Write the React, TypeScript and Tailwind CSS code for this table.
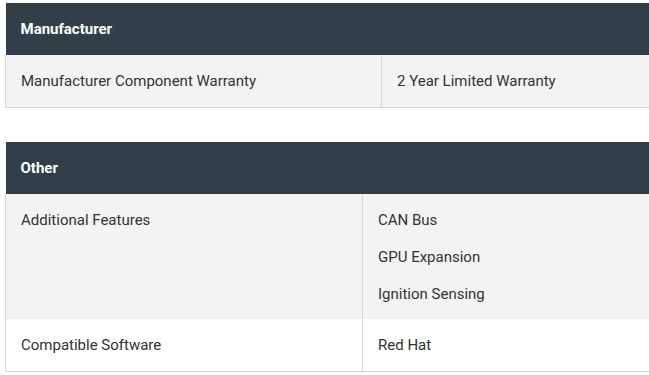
import React from 'react';

type Row = { label: string; values: string[]; shaded?: boolean };
type Section = { title: string; firstCol: string; rows: Row[] };

const sections: Section[] = [
    {
        title: 'Manufacturer',
        firstCol: 'w-[376px]',
        rows: [{ label: 'Manufacturer Component Warranty', values: ['2 Year Limited Warranty'], shaded: true }],
    },
    {
        title: 'Other',
        firstCol: 'w-[357px]',
        rows: [
            { label: 'Additional Features', values: ['CAN Bus', 'GPU Expansion', 'Ignition Sensing'], shaded: true },
            { label: 'Compatible Software', values: ['Red Hat'] },
        ],
    },
];

const SpecTable: React.FC<{ section: Section }> = ({ section }) => (
    <table className="w-[700px] border-collapse border-b border-[#d3d6da] text-[15px] leading-[22px] text-[#333333]">
        <thead>
            <tr className="bg-[#333f48]">
                <th colSpan={2} className="h-[52px] px-[15px] text-left font-bold text-white">
                    {section.title}
                </th>
            </tr>
        </thead>
        <tbody>
            {section.rows.map((row, i) => {
                const last = i === section.rows.length - 1;
                const cell = `border-l border-[#d3d6da] px-[15px] pt-[15px] align-top ${last ? 'pb-[15px]' : 'pb-[14px]'}`;
                return (
                    <tr key={row.label} className={row.shaded ? 'bg-[#f3f3f3]' : 'bg-white'}>
                        <td className={`${section.firstCol} ${cell}`}>{row.label}</td>
                        <td className={cell}>
                            <div className="flex flex-col gap-[15px]">
                                {row.values.map((v) => (
                                    <span key={v}>{v}</span>
                                ))}
                            </div>
                        </td>
                    </tr>
                );
            })}
        </tbody>
    </table>
);

export default function App() {
    return (
        <div className="w-[649px] h-[375px] overflow-hidden bg-white pl-[5px] pt-[3px] font-['Roboto',sans-serif]">
            <div className="flex flex-col gap-[34px]">
                {sections.map((s) => (
                    <SpecTable key={s.title} section={s} />
                ))}
            </div>
        </div>
    );
}
